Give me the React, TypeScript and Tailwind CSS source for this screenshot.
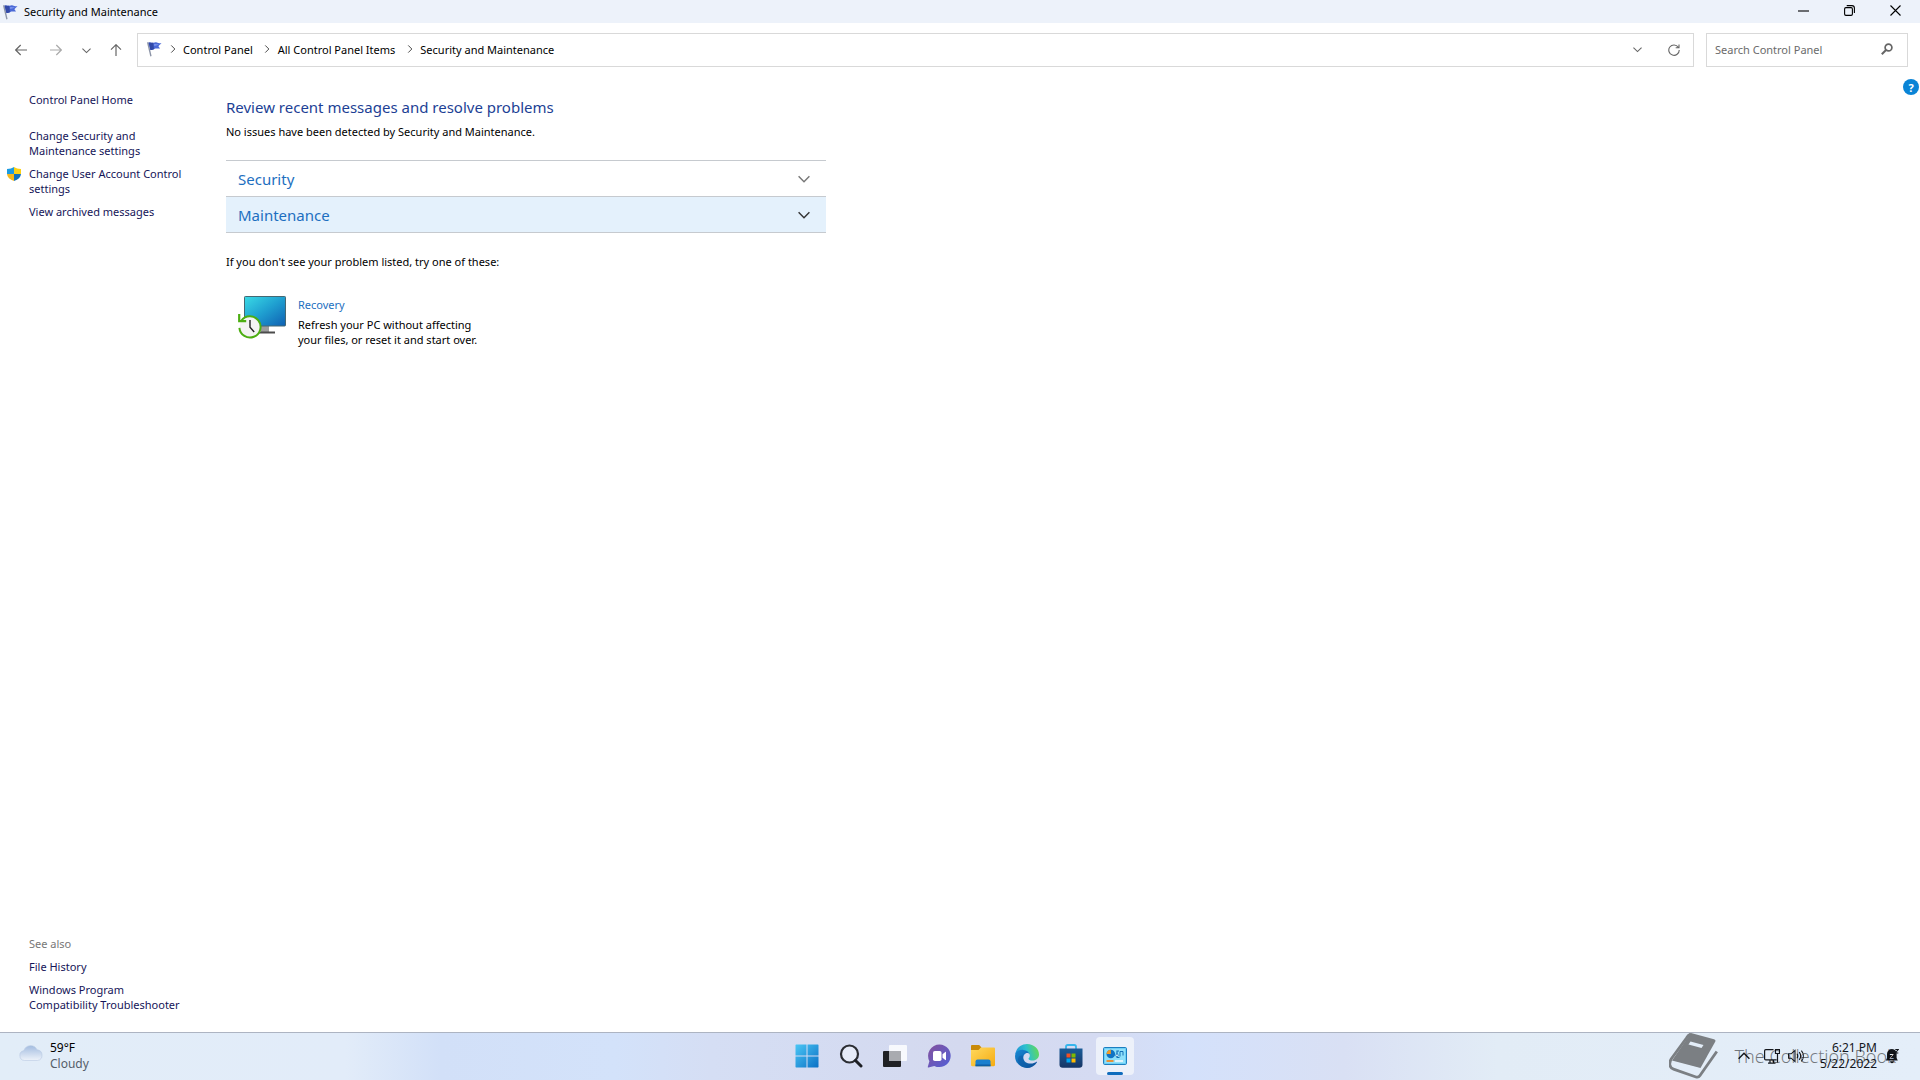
import type { ReactNode } from "react";

type IconProps = { className?: string };

function Flag({ className }: IconProps) {
  return (
    <svg viewBox="0 0 16 16" className={className} aria-hidden="true">
      <path d="M1 1.600 2.400 1.100 5.600 15 4.300 15.400z" fill="#8b93a6" />
      <path d="M2.600 1.800C4.400.8 5.600 2.200 7.400 1.700 8.900 1.200 9.600.9 10.800 1.400c1.300.5 2.600 1.100 4.700.8-1 1.100-2.600 1.800-2.900 2.900-.2 1 1 1.500 1.400 2.300-1.900.5-3.300-.3-4.700.2-1.600.6-2.500 1.700-4.900 1.300z" fill="#4b69d6" />
      <path d="M2.600 1.800c1.800-1 2.900.3 4.600 0L8 7.900c-1.400.6-2 1.200-3.600 1z" fill="#3249a8" />
      <path d="M8 3.200c1.600-.6 2.600.3 4.800 0-1 .8-1.600 1-2.500 1.200-.9.100-1.500.3-2.100.7z" fill="#7c96f0" />
    </svg>
  );
}

function Shield({ className }: IconProps) {
  return (
    <svg viewBox="0 0 14 14" className={className} aria-hidden="true">
      <path d="M7 0C5.200 1.300 2.800 1.900 0 1.900V7h7z" fill="#1d9be0" />
      <path d="M7 0c1.800 1.300 4.200 1.900 7 1.900V7H7z" fill="#fbd116" />
      <path d="M0 7c.3 3.200 2.700 5.700 7 7V7z" fill="#f5b81c" />
      <path d="M14 7c-.3 3.200-2.700 5.700-7 7V7z" fill="#1272bd" />
    </svg>
  );
}

function RecoveryIcon() {
  return (
    <svg viewBox="0 0 48 46" className="h-[46px] w-[48px] shrink-0" aria-hidden="true">
      <defs>
        <linearGradient id="screen" x1="0" y1="0" x2="1" y2="1">
          <stop offset="0" stopColor="#3adbe6" />
          <stop offset=".5" stopColor="#1f9fd0" />
          <stop offset="1" stopColor="#0f5fb2" />
        </linearGradient>
      </defs>
      <rect x="23" y="33" width="8" height="7" fill="#9d9d9d" />
      <rect x="17" y="38.500" width="20" height="2" fill="#4c4c4c" />
      <rect x="6.500" y="3.500" width="41" height="29.500" rx=".8" fill="url(#screen)" stroke="#456873" />
      <circle cx="12" cy="34" r="10.500" fill="#f3f3f3" />
      <path d="M3.300 27.800A10.600 10.600 0 1 1 1.400 34.800" fill="none" stroke="#4cae12" strokeWidth="2" />
      <path d="M1.200 21v7.200h7" fill="none" stroke="#4cae12" strokeWidth="2.200" />
      <path d="M12 27v7.300l4.200 4.700" fill="none" stroke="#222" strokeWidth="1.400" />
    </svg>
  );
}

function Arrow({ className }: IconProps) {
  return (
    <svg viewBox="0 0 12 12" className={className} fill="none" stroke="currentColor" strokeWidth="1.200" aria-hidden="true">
      <path d="M12 6H.8M5.700 1 .7 6l5 5" />
    </svg>
  );
}

function Chevron({ className }: IconProps) {
  return (
    <svg viewBox="0 0 10 10" className={className} fill="none" stroke="currentColor" strokeWidth="1.200" aria-hidden="true">
      <path d="m.5 2.800 4.500 4.500 4.500-4.500" />
    </svg>
  );
}

function WindowButton({ label, children }: { label: string; children: ReactNode }) {
  return (
    <button aria-label={label} className="flex h-full w-[46px] items-center justify-center pb-0.5">
      <svg viewBox="0 0 11 11" className="h-[11px] w-[11px]" fill="none" stroke="currentColor" strokeWidth="1.100">
        {children}
      </svg>
    </button>
  );
}

function TitleBar() {
  return (
    <header className="flex h-[23px] items-center justify-between bg-[#edf2fa] pr-0.5">
      <div className="flex items-center gap-1.5 pl-0.5">
        <Flag className="h-4 w-4" />
        <span>Security and Maintenance</span>
      </div>
      <div className="flex h-full">
        <WindowButton label="Minimize"><path d="M0 6h11" /></WindowButton>
        <WindowButton label="Restore">
          <rect x=".6" y="2.600" width="7.800" height="7.800" rx="1.300" />
          <path d="M2.700.6h5.200a2.500 2.500 0 0 1 2.500 2.500v5" />
        </WindowButton>
        <WindowButton label="Close"><path d="m.5.500 10 10m0-10-10 10" /></WindowButton>
      </div>
    </header>
  );
}

const crumbs = ["Control Panel", "All Control Panel Items", "Security and Maintenance"];

function AddressBar() {
  return (
    <div className="flex items-center pt-[10px] pr-3 pl-[15px] text-[#666]">
      <button aria-label="Back"><Arrow className="h-3 w-3" /></button>
      <button aria-label="Forward" className="ml-[23px] text-[#aaa]"><Arrow className="h-3 w-3 rotate-180" /></button>
      <button aria-label="Recent locations" className="ml-5"><Chevron className="h-[9px] w-[9px]" /></button>
      <button aria-label="Up" className="ml-[19px]"><Arrow className="h-3 w-3 rotate-90" /></button>
      <nav className="ml-[15px] flex h-[34px] flex-1 items-center border border-[#d9d9d9] pr-[13px] pb-0.5 pl-2">
        <Flag className="h-4 w-4" />
        <ol className="flex flex-1 items-center gap-1 text-black">
          {crumbs.map((crumb) => (
            <li key={crumb} className="flex items-center">
              <span className="flex w-[21px] justify-center text-[#444]">
                <Chevron className="h-2 w-2 -rotate-90" />
              </span>
              <a href="#">{crumb}</a>
            </li>
          ))}
        </ol>
        <button aria-label="Previous locations"><Chevron className="h-[9px] w-[9px]" /></button>
        <button aria-label="Refresh" className="ml-[26px] pt-0.5">
          <svg viewBox="0 0 12 12" className="h-3 w-3" fill="none" stroke="currentColor" strokeWidth="1.100">
            <path d="M10.300 3.200A5.200 5.200 0 1 0 11.200 6M11 .4v3.300H7.700" />
          </svg>
        </button>
      </nav>
      <div className="ml-3 flex h-[34px] w-[202px] items-center border border-[#d9d9d9] pr-3.5 pb-0.5 pl-2">
        <input
          type="search"
          aria-label="Search Control Panel"
          placeholder="Search Control Panel"
          className="min-w-0 flex-1 outline-none placeholder:text-[#6b6b6b]"
        />
        <svg viewBox="0 0 12 12" className="h-3 w-3" fill="none" stroke="currentColor" aria-hidden="true">
          <circle cx="7.500" cy="4.500" r="3.400" strokeWidth="1.700" />
          <path d="M5 7 .8 11.200" strokeWidth="2" />
        </svg>
      </div>
    </div>
  );
}

function Sidebar() {
  return (
    <aside className="flex w-[226px] shrink-0 flex-col pt-[15px] pr-8 pb-5 pl-[29px] text-[#151558]">
      <a href="#">Control Panel Home</a>
      <ul className="mt-[21px] space-y-2">
        <li><a href="#">Change Security and<br />Maintenance settings</a></li>
        <li className="relative">
          <Shield className="absolute top-px -left-[22px] h-3.5 w-3.5" />
          <a href="#">Change User Account Control settings</a>
        </li>
        <li><a href="#">View archived messages</a></li>
      </ul>
      <h2 className="mt-auto text-[#777]">See also</h2>
      <ul className="mt-2 space-y-2">
        <li><a href="#">File History</a></li>
        <li><a href="#">Windows Program<br />Compatibility Troubleshooter</a></li>
      </ul>
    </aside>
  );
}

function Content() {
  return (
    <main className="flex-1 pt-5">
      <h1 className="text-[15px] leading-5 text-[#1d3f95]">Review recent messages and resolve problems</h1>
      <p className="mt-[7px]">No issues have been detected by Security and Maintenance.</p>
      <div className="mt-[21px] w-[600px] border-t border-[#c6cacf] text-[15px] text-[#1d6fc0]">
        <button className="flex h-9 w-full items-center justify-between border-b border-[#c6cacf] pt-px pr-4 pl-3">
          Security
          <Chevron className="h-3 w-3 text-[#777]" />
        </button>
        <button className="flex h-9 w-full items-center justify-between border-b border-[#c6cacf] bg-[#e4f1fc] pt-px pr-4 pl-3">
          Maintenance
          <Chevron className="h-3 w-3 text-[#333]" />
        </button>
      </div>
      <p className="mt-[21px]">If you don't see your problem listed, try one of these:</p>
      <div className="mt-6 flex gap-3 pl-3">
        <RecoveryIcon />
        <div className="pt-1">
          <a href="#" className="text-[#1d6fc0]">Recovery</a>
          <p className="mt-[5px]">Refresh your PC without affecting<br />your files, or reset it and start over.</p>
        </div>
      </div>
    </main>
  );
}

function StartIcon() {
  return (
    <svg viewBox="0 0 24 24" className="h-6 w-6">
      <defs>
        <linearGradient id="start" x1="0" y1="0" x2="24" y2="24" gradientUnits="userSpaceOnUse">
          <stop offset="0" stopColor="#4cc8f6" />
          <stop offset="1" stopColor="#0a6fc4" />
        </linearGradient>
      </defs>
      <path d="M1 .5h10.500V11.500H.5V1zM12.500.5H23l.5.5v10.500h-11zM.5 12.500h11v11H1l-.5-.5zM12.500 12.500h11V23l-.5.5H12.500z" fill="url(#start)" />
    </svg>
  );
}

function SearchIcon() {
  return (
    <svg viewBox="0 0 24 24" className="h-6 w-6" fill="none">
      <circle cx="10.500" cy="10" r="8.500" stroke="#2b2d33" strokeWidth="2.200" fill="#e6ebf8" />
      <path d="m16.500 16.500 5.500 5.500" stroke="#1d1f24" strokeWidth="3" strokeLinecap="round" />
    </svg>
  );
}

function TaskViewIcon() {
  return (
    <svg viewBox="0 0 24 24" className="h-6 w-6">
      <rect x="0" y="7" width="18" height="16" rx="1" fill="#202124" />
      <rect x="6" y="1" width="18" height="16" rx="1" fill="#fff" fillOpacity=".82" />
      <path d="M6 7h12v10H6z" fill="#a9abb0" />
    </svg>
  );
}

function ChatIcon() {
  return (
    <svg viewBox="0 0 24 24" className="h-6 w-6">
      <defs>
        <linearGradient id="chat" x1="0" y1="0" x2="1" y2="1">
          <stop offset="0" stopColor="#85519c" />
          <stop offset="1" stopColor="#5160d8" />
        </linearGradient>
      </defs>
      <path d="M12.500.5a11.300 11.300 0 1 1-5.200 21.400L1.500 23.500c-.5.100-.8-.3-.7-.8l1.600-5.500A11.400 11.400 0 0 1 12.500.5z" fill="url(#chat)" />
      <rect x="6" y="7" width="8.500" height="10" rx="1.800" fill="#fff" />
      <path d="m15.500 10.300 2.800-2.300c.4-.3.700-.1.700.3v7.400c0 .4-.3.600-.7.300l-2.800-2.300z" fill="#fff" />
    </svg>
  );
}

function FolderIcon() {
  return (
    <svg viewBox="0 0 24 24" className="h-6 w-6">
      <defs>
        <linearGradient id="folder" x1="0" y1="0" x2="1" y2="1">
          <stop offset="0" stopColor="#ffd95e" />
          <stop offset="1" stopColor="#f5ab12" />
        </linearGradient>
      </defs>
      <path d="M0 2.200C0 1.500.5 1 1.200 1h7l2.300 2.500L8 6.500H0z" fill="#c98a08" />
      <path d="M0 6h7.500L10 3.500h12.800c.7 0 1.200.5 1.200 1.200V21c0 .7-.5 1.200-1.200 1.200H1.200C.5 22.200 0 21.700 0 21z" fill="url(#folder)" />
      <path d="M4.500 22.200v-4.700a2 2 0 0 1 2-2h11a2 2 0 0 1 2 2v4.700z" fill="#1a7fce" />
      <path d="M4.500 20.500h15v1.700h-15z" fill="#0f5ea5" />
    </svg>
  );
}

function EdgeIcon() {
  return (
    <svg viewBox="0 0 24 24" className="h-6 w-6">
      <defs>
        <linearGradient id="edgeTop" x1="0" y1=".6" x2="1" y2=".4">
          <stop offset="0" stopColor="#1f8fd8" />
          <stop offset=".5" stopColor="#2cc0cf" />
          <stop offset="1" stopColor="#63d957" />
        </linearGradient>
        <linearGradient id="edgeBottom" x1="0" y1="0" x2="1" y2="1">
          <stop offset="0" stopColor="#1788d4" />
          <stop offset="1" stopColor="#0c4b93" />
        </linearGradient>
      </defs>
      <path d="M.2 10.500C1.100 4.200 6 0 12 0c7.200 0 12 5.200 12 10.500 0 3.600-2.800 6-6.200 6-2.600 0-4.300-.8-4.300-1.800 0-.6 1.300-1 1.300-3.200 0-2.400-2.400-4.500-6-4.500-4 0-7 1.500-8.600 3.500z" fill="url(#edgeTop)" />
      <path d="M.1 11.400C.5 7.800 4 5.600 8.300 5.900c3.200.2 5.800 2 6.500 4.400-1-1.200-2.600-1.400-3.800-1-2 .8-3 2.900-2.600 5.200.5 3 3.500 5.200 7.300 5.100 2.400 0 4.200-.8 5.800-1.900.4-.2.700.1.500.5C19.800 21.900 16 24 12 24 5 24-.5 18 .1 11.400z" fill="url(#edgeBottom)" />
      <path d="M8.300 11.600c-1.400 4.800 1.800 10.400 7 11.800-5.800 1.700-12-2-12.300-7.300-.2-3.200 1.900-5 5.300-4.500z" fill="#0f5ca8" fillOpacity=".55" />
    </svg>
  );
}

function StoreIcon() {
  return (
    <svg viewBox="0 0 24 24" className="h-6 w-6">
      <defs>
        <linearGradient id="store" x1="0" y1="0" x2="0" y2="1">
          <stop offset="0" stopColor="#1a5c98" />
          <stop offset="1" stopColor="#163565" />
        </linearGradient>
      </defs>
      <path d="M7 6V2.800C7 1.700 7.700 1 8.800 1h6.400c1.100 0 1.800.7 1.800 1.800V6" fill="none" stroke="#36b5ec" strokeWidth="1.800" />
      <path d="M.5 4.500h23v16a3.200 3.200 0 0 1-3.200 3.200H3.700A3.200 3.200 0 0 1 .5 20.500z" fill="url(#store)" />
      <path d="M7.500 9.500h4v4h-4z" fill="#f25022" />
      <path d="M12.500 9.500h4v4h-4z" fill="#7fba00" />
      <path d="M7.500 14.500h4v4h-4z" fill="#00a4ef" />
      <path d="M12.500 14.500h4v4h-4z" fill="#ffb900" />
    </svg>
  );
}

function ControlPanelIcon() {
  return (
    <svg viewBox="0 0 24 24" className="h-6 w-6">
      <rect x=".5" y="3.500" width="23" height="17" rx="1.200" fill="#6fd0f5" stroke="#1c7fc0" />
      <rect x="2" y="5" width="20" height="14" fill="#8fe0fa" />
      <circle cx="7.800" cy="10" r="4.300" fill="#1173c4" />
      <path d="M7.800 10V5.700a4.300 4.300 0 0 0-4.300 4.300z" fill="#f59a23" />
      <path d="M3.500 17h7" stroke="#f08a24" strokeWidth="1.800" />
      <path d="M12 17h8" stroke="#f3f9fd" strokeWidth="1.600" />
      <path d="M14 10V7h2M13.500 13.500h3" stroke="#1570b8" strokeWidth="1.200" fill="none" />
      <path d="M17 12.500V7.500h3v4" stroke="#1570b8" fill="none" />
      <circle cx="14" cy="11.300" r="1.300" fill="#fff" stroke="#1570b8" strokeWidth=".8" />
    </svg>
  );
}

const apps = [
  { name: "Start", Icon: StartIcon },
  { name: "Search", Icon: SearchIcon },
  { name: "Task View", Icon: TaskViewIcon },
  { name: "Chat", Icon: ChatIcon },
  { name: "File Explorer", Icon: FolderIcon },
  { name: "Microsoft Edge", Icon: EdgeIcon },
  { name: "Microsoft Store", Icon: StoreIcon },
  { name: "Control Panel", Icon: ControlPanelIcon, active: true },
];

function Watermark() {
  return (
    <div className="pointer-events-none absolute top-0 right-6 flex items-center gap-4 text-[18px] font-light text-black/50">
      <svg viewBox="0 0 50 47" className="h-[47px] w-[50px] text-[#7b7f83]" aria-hidden="true">
        <path d="M22 0 45 6.200c1.400.4 1.800 1.300 1.200 2.600L31.500 35 3 27.500z" fill="currentColor" />
        <path d="M22 1C20 1.500 19 2.500 17.500 5L2.500 25.500C-.5 30 .5 35 4.500 36.200L27 44c1.800.5 3 .1 4-1.500L47.800 18.500" fill="none" stroke="currentColor" strokeWidth="2.800" />
        <path d="M4 28.500c-2 3.500.5 5.500 2 6l21.500 7.200L31 35.500z" fill="#e3edf8" />
        <path d="m21.500 8.500 13 3.500-2 3L19.500 11.500z" fill="#e3edf8" />
      </svg>
      <span>The Collection Book</span>
    </div>
  );
}

function Tray() {
  return (
    <div className="mr-1 flex items-center text-[#14171c]">
      <button aria-label="Show hidden icons"><Chevron className="h-3 w-3 rotate-180" /></button>
      <button aria-label="Network" className="ml-3.5">
        <svg viewBox="0 0 16 16" className="h-4 w-4" fill="none" stroke="currentColor" strokeWidth="1.200">
          <path d="M9.500 1.600H1.800c-.7 0-1.200.5-1.200 1.200v7.900c0 .7.500 1.200 1.200 1.200h10.900M4 15.200h7.500M6 12v3M9.500 12v3" />
          <path d="M11.500 1.500h4v4h-4zM13.500 5.500v9" />
        </svg>
      </button>
      <button aria-label="Volume" className="ml-2">
        <svg viewBox="0 0 16 16" className="h-4 w-4" fill="none" stroke="currentColor" strokeWidth="1.100">
          <path d="M.6 5.800h2.600L7 2.400v11.200L3.200 10.200H.6zM9 5.800c.9 1.300.9 3.100 0 4.400M11.200 4.200c1.800 2.300 1.800 5.300 0 7.600M13.400 2.600c2.600 3.200 2.600 7.600 0 10.800" />
        </svg>
      </button>
      <time dateTime="2022-05-22T18:21" className="ml-4 text-right text-xs leading-4">
        6:21 PM<br />5/22/2022
      </time>
      <button aria-label="Notifications" className="ml-2">
        <svg viewBox="0 0 14 16" className="h-4 w-3.5">
          <path d="M7 1a5 5 0 0 0-5 5v4L.8 12.500h12L11.600 10V6A5 5 0 0 0 7 1zM5 13.300h4a2 2 0 0 1-4 0z" fill="currentColor" />
          <path d="M4.800 6.500h3.600l-3.600 4h3.600" fill="none" stroke="#e3edf8" strokeWidth="1" />
          <path d="M10.300 1.500h3l-3 3.500h3" fill="none" stroke="currentColor" strokeWidth="1.100" />
        </svg>
      </button>
    </div>
  );
}

function Taskbar() {
  return (
    <footer className="relative grid h-12 grid-cols-[1fr_auto_1fr] items-center border-t border-[#adb4c2] bg-[linear-gradient(90deg,#e2edf8_0%,#e2ecf9_18%,#d2e0f8_23%,#d3e2fa_32%,#d5def4_37%,#d4d9ef_50%,#d5dbf2_57%,#d4e1fb_62%,#d9e0f4_70%,#e2ecf6_78%,#e4eef9_100%)] pr-[17px] pb-0.5 pl-[19px]">
      <button className="flex items-center gap-[7px] justify-self-start text-left text-xs leading-4">
        <svg viewBox="0 0 24 16" className="mb-1.5 h-4 w-6" aria-hidden="true">
          <defs>
            <linearGradient id="cloud" x1="0" y1="0" x2="0" y2="1">
              <stop offset="0" stopColor="#a3bce0" />
              <stop offset="1" stopColor="#eef3fa" />
            </linearGradient>
          </defs>
          <path d="M5.500 15.500a5 5 0 0 1-.6-9.900A7 7 0 0 1 18 4.800a5.400 5.400 0 0 1 .6 10.700z" fill="url(#cloud)" stroke="#b9cae2" strokeWidth=".6" />
        </svg>
        <span>59°F<br /><span className="text-[#555d68]">Cloudy</span></span>
      </button>
      <nav aria-label="Apps" className="flex gap-1.5">
        {apps.map(({ name, Icon, active }) => (
          <button
            key={name}
            aria-label={name}
            className={`relative flex h-[38px] w-[38px] items-center justify-center rounded ${active ? "bg-[#edf1fa]" : ""}`}
          >
            <Icon />
            {active && <span className="absolute bottom-0 left-[11px] h-[3px] w-4 rounded-full bg-[#0f6cbd]" />}
          </button>
        ))}
      </nav>
      <div className="justify-self-end"><Tray /></div>
      <Watermark />
    </footer>
  );
}

export default function App() {
  return (
    <div className="flex min-h-screen flex-col bg-white font-['Noto_Sans','Open_Sans',sans-serif] text-[11px] leading-[15px] text-black">
      <TitleBar />
      <AddressBar />
      <div className="relative flex flex-1 pt-2.5">
        <Sidebar />
        <Content />
        <button
          aria-label="Help"
          className="absolute top-3 right-px flex h-4 w-4 items-center justify-center rounded-full bg-[#0a84d6] font-bold text-white"
        >
          ?
        </button>
      </div>
      <Taskbar />
    </div>
  );
}
